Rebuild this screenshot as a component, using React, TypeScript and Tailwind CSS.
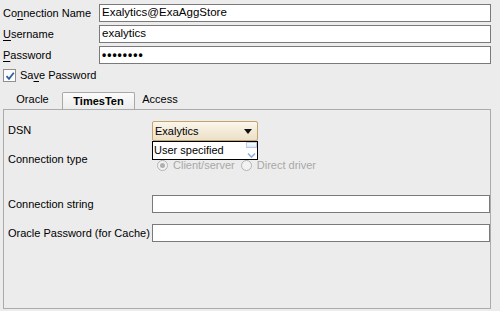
import { ReactNode } from 'react'

const font = { fontFamily: '"Liberation Sans", Arial, sans-serif' }

const Field = ({ value = '', mono = false }: { value?: string; mono?: boolean }) => (
  <div className="h-[18px] bg-white border border-[#7a7a7a] flex items-center pl-[2px] leading-none">
    <span className={mono ? 'tracking-[1px] text-[12px] font-bold' : 'text-[11.5px]'}>{value}</span>
  </div>
)

const Mn = ({ children }: { children: ReactNode }) => <span className="underline underline-offset-[2px]">{children}</span>

const Radio = ({ checked, label }: { checked?: boolean; label: string }) => (
  <div className="flex items-center gap-[5px] text-[#a8a8a8]">
    <span className="w-[11px] h-[11px] rounded-full border border-[#b4b4b4] bg-[#f2f2f2] flex items-center justify-center">
      {checked && <span className="w-[5px] h-[5px] rounded-full bg-[#b0b0b0]" />}
    </span>
    <span>{label}</span>
  </div>
)

export default function App() {
  return (
    <div className="w-[500px] h-[311px] bg-[#ececec] text-[11px] text-black overflow-hidden whitespace-nowrap" style={font}>
      {/* connection fields */}
      <div className="pt-[4px] pl-[3px] w-[491px] grid grid-cols-[96px_1fr] gap-y-[3px] items-center">
        <span>Co<Mn>n</Mn>nection Name</span>
        <Field value="Exalytics@ExaAggStore" />
        <span><Mn>U</Mn>sername</span>
        <Field value="exalytics" />
        <span><Mn>P</Mn>assword</span>
        <Field value="••••••••" mono />
      </div>

      <div className="mt-[5px] pl-[3px] flex items-center gap-[4px] h-[13px]">
        <span className="w-[13px] h-[13px] bg-white border border-[#8f8f8f] flex items-center justify-center">
          <svg width="10" height="10" viewBox="0 0 10 10">
            <path d="M1.5 5.2 L4 7.8 L8.8 1.8" fill="none" stroke="#2f5f9e" strokeWidth="1.8" />
          </svg>
        </span>
        <span>Sa<Mn>v</Mn>e Password</span>
      </div>

      {/* tabs */}
      <div className="mt-[10px] pl-[3px] flex items-end h-[17px]">
        <div className="w-[59px] flex justify-center pb-[2px]">Oracle</div>
        <div className="w-[73px] h-[17px] border border-b-0 border-[#a9a9a9] bg-gradient-to-b from-[#fbfbfb] to-[#ececec] flex items-center justify-center font-bold rounded-t-[2px]">
          TimesTen
        </div>
        <div className="w-[50px] flex justify-center pb-[2px]">Access</div>
      </div>

      {/* panel */}
      <div className="ml-[3px] w-[488px] h-[200px] border border-[#ababab] relative">
        <div className="grid grid-cols-[144px_1fr] pl-[4px] pt-[11px]">
          <span className="pt-[1px]">DSN</span>
          <div>
            <div className="w-[106px] h-[20px] border border-[#c4a46a] rounded-[2px] bg-gradient-to-b from-[#fbf6ec] to-[#ece0c6] flex items-center justify-between pl-[2px] pr-[5px]">
              <span>Exalytics</span>
              <svg width="8" height="5" viewBox="0 0 8 5"><path d="M0 0 H8 L4 5 Z" fill="#111" /></svg>
            </div>
          </div>

          <span className="mt-[11px] leading-[14px]">Connection type</span>
          <div className="mt-[18px] flex items-center gap-[6px] pl-[5px] h-[12px]">
            <Radio checked label="Client/server" />
            <Radio label="Direct driver" />
          </div>

          <span className="mt-[24px] self-center">Connection string</span>
          <div className="mt-[24px]"><Field /></div>

          <span className="mt-[11px] self-center">Oracle Password (for Cache)</span>
          <div className="mt-[11px]"><Field /></div>
        </div>

        {/* open combo list */}
        <div className="absolute left-[148px] top-[31px] w-[106px] h-[19px] bg-white border border-black flex">
          <span className="flex-1 pl-[1px] leading-[17px]">User specified</span>
          <div className="w-[11px] flex flex-col justify-between">
            <div className="h-[6px] border border-[#b9cbe6] bg-gradient-to-b from-white to-[#dce8f8]" />
            <svg width="11" height="7" viewBox="0 0 11 7"><path d="M2 1.5 L5.5 5 L9 1.5" fill="none" stroke="#8fb0d8" strokeWidth="1.6" /></svg>
          </div>
        </div>
      </div>
    </div>
  )
}
